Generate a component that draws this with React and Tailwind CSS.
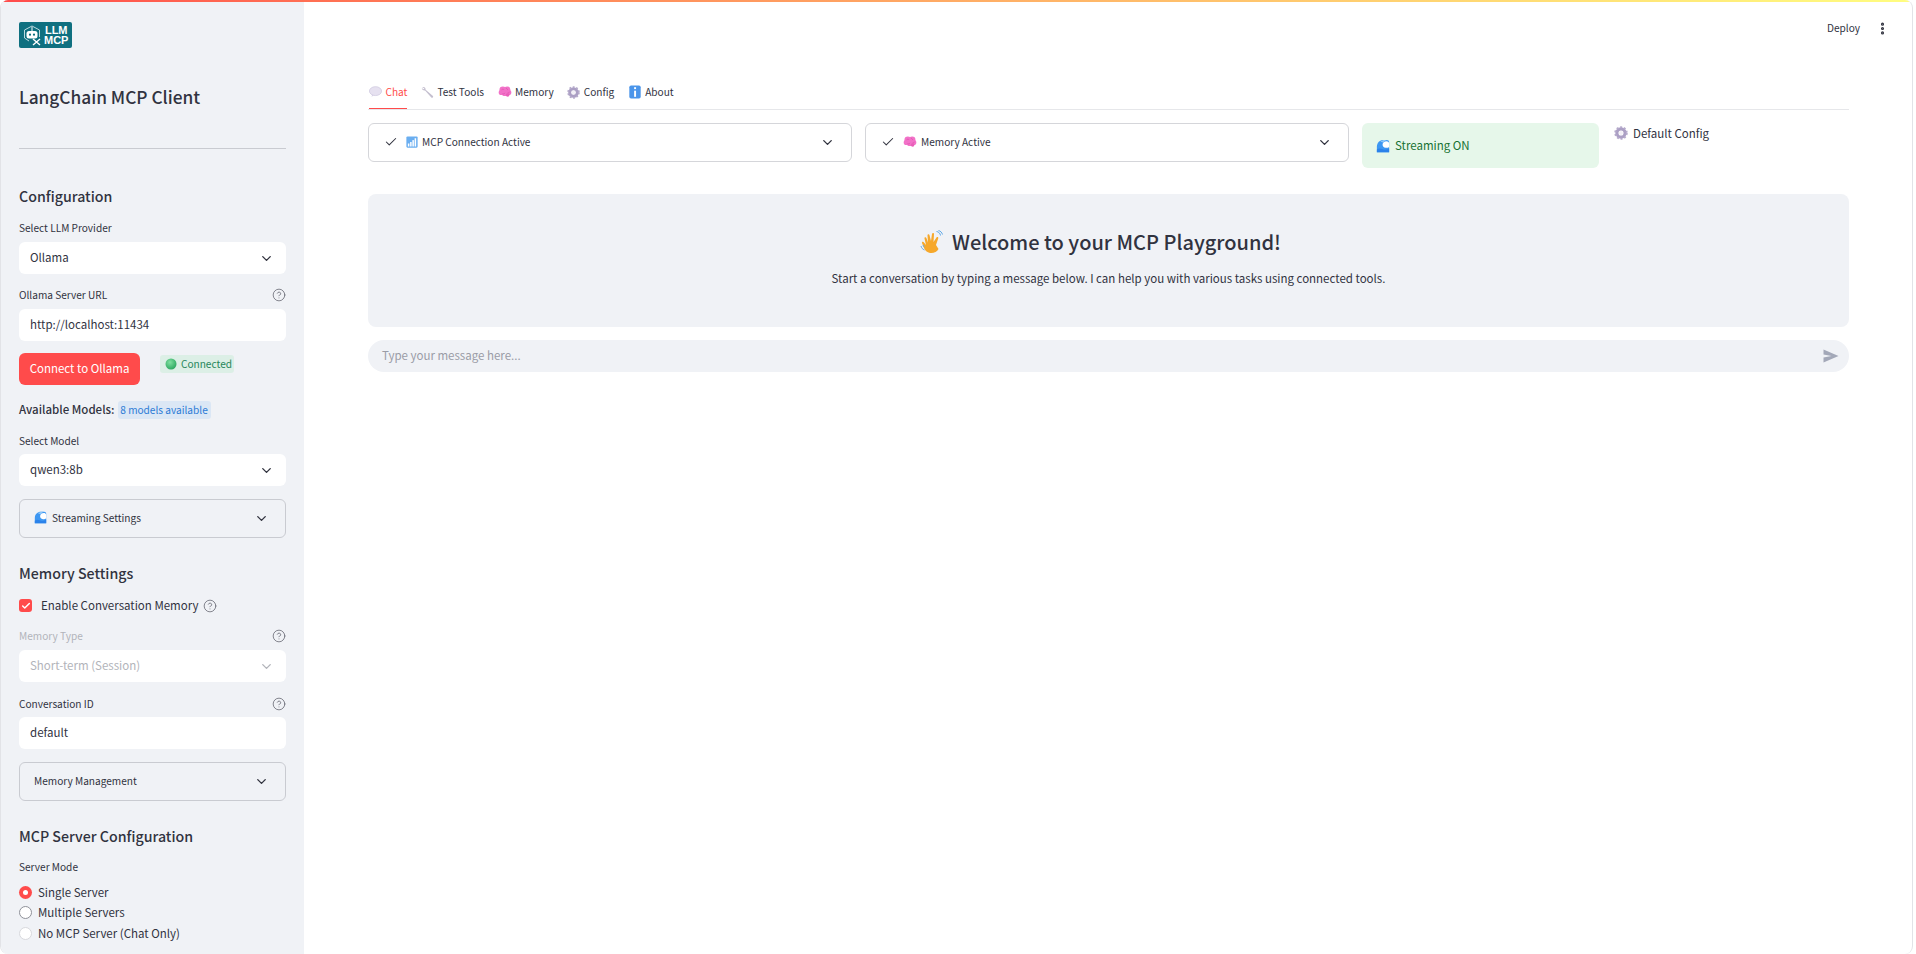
import React from "react";
import { ChevronDown, Check, CircleHelp, EllipsisVertical } from "lucide-react";

const Wave = ({ s = 14 }) => (
  <svg width={s} height={s} viewBox="0 0 16 16" className="shrink-0">
    <path d="M1 15V8.500C1 4 4.500 1 8.500 1H12.500c1.500 0 2.500 1 2.500 2.500V15z" fill="#3d97f2" />
    <path d="M5 3c1.500-1.300 3-2 5-2h2.500C10.500 1.500 9 2.400 8.300 4z" fill="#8cc8fa" />
    <path d="M7.500 6.500c0-2.500 2-4 4.500-4 1.500 0 3 .8 3 2.500v4c-1 1-2.500 1.300-4 1-2.300-.3-3.500-1.700-3.500-3.500z" fill="#fff" />
    <path d="M1 15v-3c2-1.500 4-1.500 6-.5 2.500 1 5.500 1 8-1V15z" fill="#2b82ea" />
  </svg>
);
const Brain = ({ s = 14 }) => (
  <svg width={s} height={s} viewBox="0 0 16 16" className="shrink-0">
    <g fill="#f272c8">
      <circle cx="5.500" cy="5.500" r="3.800" />
      <circle cx="10.500" cy="5.300" r="3.700" />
      <circle cx="3.800" cy="8.500" r="3" />
      <circle cx="12.200" cy="8.500" r="3" />
      <circle cx="8" cy="9" r="3.700" />
      <circle cx="11" cy="11.500" r="2" fill="#e95fb9" />
    </g>
    <path d="M4 5.500c1-1 2.500-1 3 0M9 3.800c1 0 2 .8 2 2M5 10c1 .5 2.500 0 3-1M11 9c1 0 1.800-.2 2.300-1" stroke="#d94aa8" strokeWidth=".7" fill="none" />
  </svg>
);
const Gear = ({ s = 14 }) => (
  <svg width={s} height={s} viewBox="0 0 16 16" className="shrink-0">
    <circle cx="8" cy="8" r="4.700" fill="none" stroke="#ab9fc4" strokeWidth="3.600" />
    <circle cx="8" cy="8" r="6.600" fill="none" stroke="#b5aacb" strokeWidth="2.200" strokeDasharray="2.200 2" />
    <circle cx="8" cy="8" r="2.200" fill="#f2eff6" />
  </svg>
);
const Bubble = () => (
  <svg width="13" height="13" viewBox="0 0 16 16" className="shrink-0">
    <ellipse cx="8" cy="7.500" rx="7.500" ry="5.500" fill="#e6e1f0" stroke="#c9c2dc" strokeWidth=".8" />
    <path d="M4 12l-1 2.500 3-1.500z" fill="#d7d0e6" />
  </svg>
);
const Wrench = () => (
  <svg width="13" height="13" viewBox="0 0 16 16" className="shrink-0">
    <path d="M1.500 1.500c2.500-1 4.500.8 4.200 3.200l9 7.500c1 1-.8 3-2 2L5 5.600C2.800 6 1 4.500 1 2.500l2 1.500 1.300-1z" fill="#c4bfcf" />
  </svg>
);
const Info = () => (
  <svg width="14" height="14" viewBox="0 0 16 16" className="shrink-0">
    <rect x="1.500" y="0.500" width="13" height="15" rx="2" fill="#4b95ea" />
    <rect x="7" y="2.500" width="2.200" height="2.200" fill="#fff" />
    <rect x="7" y="6.500" width="2.200" height="7" fill="#fff" />
  </svg>
);
const Bars = () => (
  <svg width="12" height="12" viewBox="0 0 16 16" className="shrink-0">
    <rect x="0.500" y="0.500" width="15" height="15" rx="1.500" fill="#6aaef0" />
    <rect x="2.500" y="10" width="2" height="4" fill="#fff" />
    <rect x="5.500" y="8" width="2" height="6" fill="#fff" />
    <rect x="8.500" y="5.500" width="2" height="8.500" fill="#fff" />
    <rect x="11.500" y="3" width="2" height="11" fill="#fff" />
  </svg>
);
const GreenDot = () => (
  <svg width="12" height="12" viewBox="0 0 12 12" className="shrink-0">
    <defs>
      <radialGradient id="gd" cx="40%" cy="35%" r="70%">
        <stop offset="0%" stopColor="#7fe0a0" />
        <stop offset="100%" stopColor="#2aa55e" />
      </radialGradient>
    </defs>
    <circle cx="6" cy="6" r="5.500" fill="url(#gd)" />
  </svg>
);
const Hand = () => (
  <svg width="24" height="24" viewBox="0 0 24 24" className="shrink-0">
    <path d="M10 23c-3-.5-5-2.500-6-5L2 13c-.4-1.200 1.200-1.800 1.800-.7L6 15 4.500 8.500c-.3-1.300 1.500-1.700 1.900-.5L8 12.500 7.500 5.500c-.1-1.400 1.800-1.600 2-.2L11 11l1-7c.2-1.400 2.200-1.200 2 .2l-.5 7.800 3-4.500c.8-1.100 2.300-.2 1.700 1L16 15l2.500 4c-1.500 3-5 4.500-8.500 4z" fill="#f6a82b" />
    <path d="M16.500 1.500c2 .2 3.800 1.800 4 4M18.500 0.500c2 .5 3.500 2 4 4M1 16c.5 2 1.500 3.200 3.500 4M3 15c.3 1 .8 1.700 1.500 2.300" stroke="#62aae8" strokeWidth="1" fill="none" />
  </svg>
);
const Logo = () => (
  <div className="flex h-[26px] w-[53px] items-center rounded-[2px] bg-[#0f7080] pl-[3px]">
    <svg width="20" height="22" viewBox="0 0 20 22" className="shrink-0">
      <path d="M10 2l7.500 4v7M2.500 14V6L10 2M2.500 14L7 17" stroke="#cfe5ea" strokeWidth=".9" fill="none" />
      <rect x="4.500" y="7" width="11" height="7.500" rx="2.500" fill="#fff" />
      <circle cx="8" cy="10.700" r="1.100" fill="#0f7080" />
      <circle cx="12" cy="10.700" r="1.100" fill="#0f7080" />
      <path d="M10 3v4" stroke="#fff" strokeWidth="1" />
      <path d="M11 15l7 6M18 15l-7 6" stroke="#fff" strokeWidth="1.400" />
    </svg>
    <div className="ml-[2px] text-center text-[11px] font-bold leading-[10.500px] text-white [font-family:'Liberation_Sans',sans-serif]">
      <div>LLM</div>
      <div>MCP</div>
    </div>
  </div>
);

const Help = ({ className = "" }) => (
  <CircleHelp size={14} strokeWidth={1.300} className={`text-[#5f616b] ${className}`} />
);
const Label = ({ children, help, faded }) => (
  <div className={`flex h-[14px] items-center justify-between text-[10.100px] ${faded ? "text-[#b2b4ba]" : "text-[#31333f]"}`}>
    <span>{children}</span>
    {help && <Help />}
  </div>
);
const Select = ({ children, faded }) => (
  <div className={`mt-[7px] flex h-[32px] items-center justify-between rounded-[6px] bg-white pl-[11px] pr-[12px] text-[11.500px] ${faded ? "text-[#b2b4ba]" : "text-[#31333f]"}`}>
    <span>{children}</span>
    <ChevronDown size={15} strokeWidth={2.200} className={faded ? "text-[#b2b4ba]" : "text-[#31333f]"} />
  </div>
);
const Input = ({ children }) => (
  <div className="mt-[7px] flex h-[32px] items-center rounded-[6px] bg-white pl-[11px] text-[11.500px] text-[#31333f]">{children}</div>
);
const SideExpander = ({ children }) => (
  <div className="flex h-[39px] items-center justify-between rounded-[6px] border border-[#c9cbd1] pl-[14px] pr-[16px] text-[10.100px] text-[#31333f]">
    <span className="flex items-center gap-[5px] pb-[2px]">{children}</span>
    <ChevronDown size={15} strokeWidth={2.200} />
  </div>
);
const H3 = ({ children, className = "" }) => (
  <div className={`text-[14.200px] font-medium leading-[20px] text-[#31333f] ${className}`}>{children}</div>
);
const Radio = ({ children, on, faded }) => (
  <div className="flex h-[20.500px] items-center gap-[6px] text-[11.500px] text-[#31333f]">
    <span className={`box-border flex h-[13px] w-[13px] items-center justify-center rounded-full ${on ? "bg-[#ff4b4b]" : faded ? "border border-[#d8d9dd] bg-white" : "border border-[#8f9199] bg-white"}`}>
      {on && <span className="h-[5px] w-[5px] rounded-full bg-white" />}
    </span>
    {children}
  </div>
);
const Tab = ({ icon, children, active }) => (
  <div className={`flex h-[36px] items-center gap-[3.500px] pt-[2px] text-[10.100px] ${active ? "-mb-px border-b-[1.500px] border-[#ff4b4b] text-[#ff4b4b]" : "text-[#31333f]"}`}>
    {icon}
    {children}
  </div>
);
const MainExpander = ({ children }) => (
  <div className="flex h-[39px] flex-1 items-center justify-between rounded-[6px] border border-[#d5d6da] pl-[15px] pr-[16px] text-[10.100px] text-[#31333f]">
    <span className="flex items-center gap-[4px] pb-[1px]">
      <Check size={14} strokeWidth={1.800} className="mr-[4px]" />
      {children}
    </span>
    <ChevronDown size={15} strokeWidth={2.200} />
  </div>
);

export default function App() {
  return (
    <div className="flex h-[954px] w-[1916px] bg-white pr-[3px] [font-family:'Noto_Sans_CJK_SC','Noto_Sans',sans-serif]">
      <div className="flex min-w-0 flex-1 flex-col overflow-hidden rounded-[8px] border-x border-[#e2e3e7]">
        <div className="h-[2px] shrink-0 bg-gradient-to-r from-[#ff4b4b] to-[#fffd80]" />
        <div className="flex min-h-0 flex-1">
          <aside className="w-[303px] shrink-0 bg-[#f0f2f6] pl-[18px] pr-[18px] pt-[20px]">
            <Logo />
            <div className="mt-[36px] text-[17.300px] font-medium leading-[26px] text-[#31333f]">LangChain MCP Client</div>
            <div className="mt-[38px] h-px bg-[#c9cbd1]" />
            <H3 className="mt-[37px]">Configuration</H3>
            <div className="mt-[15px]"><Label>Select LLM Provider</Label></div>
            <Select>Ollama</Select>
            <div className="mt-[14px]"><Label help>Ollama Server URL</Label></div>
            <Input>http://localhost:11434</Input>
            <div className="mt-[12px] flex items-start gap-[20px]">
              <div className="flex h-[32px] w-[121px] items-center justify-center rounded-[6px] bg-[#ff4b4b] text-[11.500px] text-white">Connect to Ollama</div>
              <div className="mt-[2px] flex h-[18px] w-[74px] items-center gap-[4px] rounded-[3px] bg-[#dcefe6] pl-[5px] text-[10.100px] text-[#26865a]">
                <GreenDot />
                Connected
              </div>
            </div>
            <div className="mt-[16px] flex h-[18px] items-center gap-[3px]">
              <span className="whitespace-nowrap text-[11.500px] font-medium text-[#31333f]">Available Models:</span>
              <span className="flex h-[18px] w-[93px] items-center justify-center rounded-[3px] bg-[#dbe7f5] text-[10.100px] text-[#2c7bd6]">8 models available</span>
            </div>
            <div className="-mb-[1px] mt-[15px]"><Label>Select Model</Label></div>
            <Select>qwen3:8b</Select>
            <div className="mt-[13px]">
              <SideExpander><Wave s={13} />Streaming Settings</SideExpander>
            </div>
            <H3 className="mt-[25px]">Memory Settings</H3>
            <div className="mt-[16px] flex h-[13px] items-center gap-[9px] text-[11.500px] text-[#31333f]">
              <span className="flex h-[13px] w-[13px] items-center justify-center rounded-[3px] bg-[#ff4b4b]">
                <Check size={10} strokeWidth={3.500} className="text-white" />
              </span>
              <span>Enable Conversation Memory</span>
              <Help className="-ml-[5px]" />
            </div>
            <div className="mt-[17px]"><Label help faded>Memory Type</Label></div>
            <Select faded>Short-term (Session)</Select>
            <div className="-mb-[1px] mt-[15px]"><Label help>Conversation ID</Label></div>
            <Input>default</Input>
            <div className="mt-[13px]">
              <SideExpander>Memory Management</SideExpander>
            </div>
            <H3 className="mt-[25px]">MCP Server Configuration</H3>
            <div className="mt-[14px]"><Label>Server Mode</Label></div>
            <div className="mt-[8px]">
              <Radio on>Single Server</Radio>
              <Radio>Multiple Servers</Radio>
              <Radio faded>No MCP Server (Chat Only)</Radio>
            </div>
          </aside>
          <main className="relative min-w-0 flex-1 pl-[64px] pr-[63px]">
            <div className="absolute right-[22px] top-[18px] flex h-[16px] items-center gap-[15px] text-[10.100px] text-[#31333f]">
              <span>Deploy</span>
              <EllipsisVertical size={15} strokeWidth={3} />
            </div>
            <div className="mt-[71px] flex gap-[13.500px] border-b border-[#e6e7ea] pl-px">
              <Tab active icon={<Bubble />}>Chat</Tab>
              <Tab icon={<Wrench />}>Test Tools</Tab>
              <Tab icon={<Brain s={14} />}>Memory</Tab>
              <Tab icon={<Gear s={13} />}>Config</Tab>
              <Tab icon={<Info />}>About</Tab>
            </div>
            <div className="mt-[13px] flex items-start gap-[13px]">
              <div className="flex min-w-0 flex-[0_0_981px] gap-[13px]">
                <MainExpander><Bars />MCP Connection Active</MainExpander>
                <MainExpander><Brain s={14} />Memory Active</MainExpander>
              </div>
              <div className="flex h-[45px] w-[237px] shrink-0 items-center gap-[5px] rounded-[6px] bg-[#e6f7ea] pl-[14px] text-[11.500px] text-[#177233]">
                <Wave />
                Streaming ON
              </div>
              <div className="ml-[2px] flex items-center gap-[5px] text-[11.500px] leading-[20px] text-[#31333f]">
                <Gear />
                Default Config
              </div>
            </div>
            <div className="mt-[26px] flex h-[133px] flex-col items-center rounded-[8px] bg-[#f0f2f6] pt-[32px]">
              <div className="mr-[16px] flex items-center gap-[8px] text-[20px] font-medium leading-[32px] text-[#31333f]">
                <Hand />
                Welcome to your MCP Playground!
              </div>
              <div className="mt-[12px] text-[11.500px] leading-[16px] text-[#31333f]">
                Start a conversation by typing a message below. I can help you with various tasks using connected tools.
              </div>
            </div>
            <div className="mt-[13px] flex h-[32px] items-center justify-between rounded-full bg-[#f0f2f6] pl-[14px] pr-[10px] text-[11.500px] text-[#9a9ca6]">
              <span>Type your message here...</span>
              <svg width="16" height="14" viewBox="0 0 16 14">
                <path d="M0.500 0.500L15.500 7 .5 13.500V8.500l8-1.500-8-1.500z" fill="#a3a8b8" />
              </svg>
            </div>
          </main>
        </div>
      </div>
    </div>
  );
}
